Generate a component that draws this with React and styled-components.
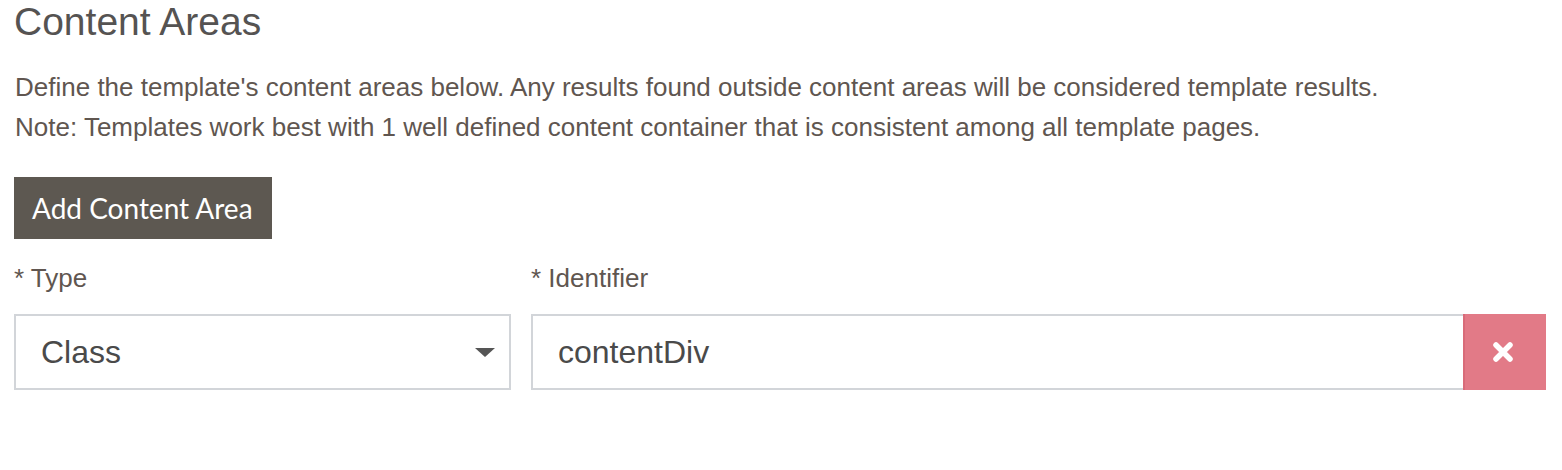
import React from 'react';
import styled, { createGlobalStyle } from 'styled-components';

const GlobalStyle = createGlobalStyle`
  body {
    margin: 0;
    background: #fff;
    font-family: "Liberation Sans", Arial, sans-serif;
  }
`;

const Page = styled.div`
  padding: 0 16px 0 14px;
  width: 1532px;
`;

const Title = styled.h2`
  margin: 0;
  padding-top: 2px;
  font-size: 39px;
  font-weight: normal;
  line-height: 40px;
  color: #555352;
`;

const Help = styled.div`
  margin-top: 25px;
  font-size: 26px;
  line-height: 40px;
  color: #605650;
  padding-left: 1px;
`;

const AddButton = styled.button`
  margin-top: 30px;
  height: 62px;
  padding: 0 19px 0 18px;
  border: none;
  background: #5d5851;
  color: #fff;
  font-family: Lato, sans-serif;
  font-size: 28px;
  cursor: pointer;
`;

const Row = styled.div`
  display: flex;
  gap: 20px;
  margin-top: 24px;
`;

const Field = styled.div`
  display: flex;
  flex-direction: column;
  width: ${p => p.$width || 'auto'};
  flex: ${p => (p.$grow ? 1 : 'none')};
`;

const Label = styled.label`
  font-size: 26px;
  line-height: 30px;
  color: #605650;
  margin-bottom: 21px;
`;

const Box = styled.div`
  display: flex;
  align-items: center;
  height: 76px;
  box-sizing: border-box;
  border: 2px solid #d2d5d9;
  background: #fff;
  font-size: 32px;
  color: #4a4a4a;
  padding-left: 25px;
`;

const SelectBox = styled(Box)`
  justify-content: space-between;
  padding-right: 14px;
`;

const Caret = styled.span`
  width: 0;
  height: 0;
  border-left: 10px solid transparent;
  border-right: 10px solid transparent;
  border-top: 9px solid #555;
`;

const InputGroup = styled.div`
  display: flex;
  height: 76px;
`;

const InputBox = styled(Box)`
  flex: 1;
  border-right: none;
`;

const RemoveButton = styled.button`
  width: 83px;
  height: 76px;
  border: none;
  border-left: 2px solid #d96b79;
  background: #e27a87;
  display: flex;
  align-items: center;
  justify-content: center;
  padding: 0 6px 0 0;
  cursor: pointer;
`;

export default function App() {
  return (
    <>
      <GlobalStyle />
      <Page>
        <Title>Content Areas</Title>
        <Help>
          Define the template's content areas below. Any results found outside content areas will be considered template results.
          <br />
          Note: Templates work best with 1 well defined content container that is consistent among all template pages.
        </Help>
        <AddButton>Add Content Area</AddButton>
        <Row>
          <Field $width="497px">
            <Label>* Type</Label>
            <SelectBox>
              Class
              <Caret />
            </SelectBox>
          </Field>
          <Field $grow>
            <Label>* Identifier</Label>
            <InputGroup>
              <InputBox>contentDiv</InputBox>
              <RemoveButton aria-label="remove">
                <svg width="22" height="22" viewBox="0 0 22 22">
                  <path d="M4 4 L18 18 M18 4 L4 18" stroke="#fff" strokeWidth="5.5" strokeLinecap="round" />
                </svg>
              </RemoveButton>
            </InputGroup>
          </Field>
        </Row>
      </Page>
    </>
  );
}
